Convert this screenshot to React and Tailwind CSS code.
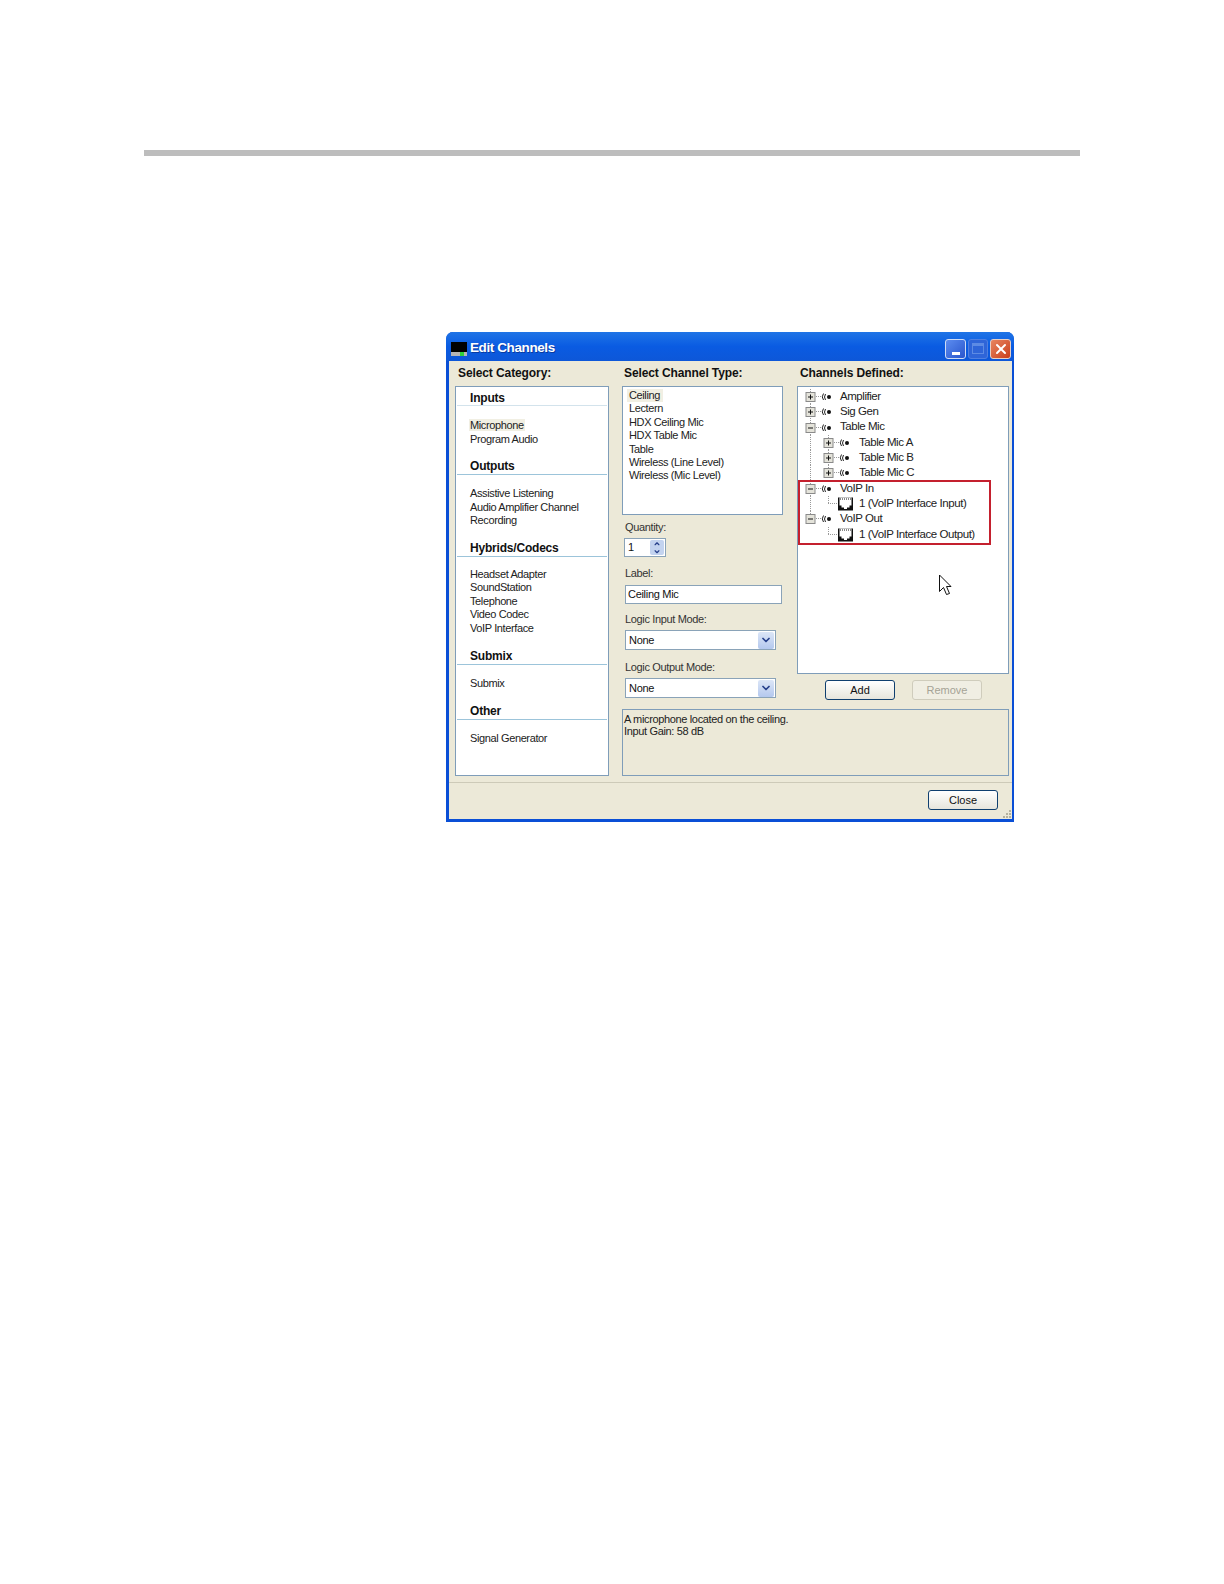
import React from "react";
import { X, ChevronUp, ChevronDown } from "lucide-react";

const sections = [
  { title: "Inputs", items: ["Microphone", "Program Audio"], top: "mt-[4px]", head: "h-[15px] border-[#d3e3ec]", gap: "mt-[13px]" },
  { title: "Outputs", items: ["Assistive Listening", "Audio Amplifier Channel", "Recording"], top: "mt-[13px]", head: "h-4 border-[#9cc4da]", gap: "mt-3" },
  { title: "Hybrids/Codecs", items: ["Headset Adapter", "SoundStation", "Telephone", "Video Codec", "VoIP Interface"], top: "mt-[13px]", head: "h-4 border-[#9cc4da]", gap: "mt-[11px]" },
  { title: "Submix", items: ["Submix"], top: "mt-[14px]", head: "h-4 border-[#9cc4da]", gap: "mt-3" },
  { title: "Other", items: ["Signal Generator"], top: "mt-[13px]", head: "h-4 border-[#9cc4da]", gap: "mt-3" },
];

const channelTypes = ["Ceiling", "Lectern", "HDX Ceiling Mic", "HDX Table Mic", "Table", "Wireless (Line Level)", "Wireless (Mic Level)"];

const treeRows = [
  { label: "Amplifier", level: 0, exp: "+", icon: "mic", rail0: true },
  { label: "Sig Gen", level: 0, exp: "+", icon: "mic", rail0: true },
  { label: "Table Mic", level: 0, exp: "-", icon: "mic", rail0: true },
  { label: "Table Mic A", level: 1, exp: "+", icon: "mic", rail0: true, rail1: true },
  { label: "Table Mic B", level: 1, exp: "+", icon: "mic", rail0: true, rail1: true },
  { label: "Table Mic C", level: 1, exp: "+", icon: "mic", rail0: true, rail1: "end" },
  { label: "VoIP In", level: 0, exp: "-", icon: "mic", rail0: true },
  { label: "1 (VoIP Interface Input)", level: 1, icon: "jack", rail0: true, rail1: "end" },
  { label: "VoIP Out", level: 0, exp: "-", icon: "mic", rail0: "end" },
  { label: "1 (VoIP Interface Output)", level: 1, icon: "jack", rail1: "end" },
];

const Heading = ({ children, className = "" }) => (
  <div className={`h-4 mb-[5px] text-[12px] leading-4 font-bold tracking-[-0.1px] text-[#111] ${className}`}>{children}</div>
);

const FieldLabel = ({ children, className = "" }) => (
  <div className={`h-[14px] ml-[3px] text-[11px] leading-[14px] tracking-[-0.35px] text-[#333] ${className}`}>{children}</div>
);

const XpButton = ({ children, disabled, className = "" }) => (
  <button
    className={`h-5 w-[70px] rounded-[3px] border text-[11px] leading-none ${
      disabled
        ? "border-[#cfccbc] bg-[#f0eee3] text-[#a5a396]"
        : "border-[#0f3f6f] bg-gradient-to-b from-white to-[#e6e5dc] text-[#111]"
    } ${className}`}
  >
    {children}
  </button>
);

const Select = ({ className = "" }) => (
  <div className={`ml-[3px] flex h-5 w-[151px] items-center justify-between border border-[#8aa3b8] bg-white pl-[3px] pr-px text-[11px] tracking-[-0.3px] text-[#111] ${className}`}>
    None
    <div className="flex h-[17px] w-4 items-center justify-center rounded-[2px] bg-gradient-to-b from-[#dce6f7] to-[#b4c8ee]">
      <ChevronDown className="h-3 w-3 text-[#27408b]" strokeWidth={3.5} />
    </div>
  </div>
);

const TreeGlyph = ({ row }) => {
  const ex = row.level === 0 ? 12 : 30;
  const ix = row.level === 0 ? 23 : 41;
  return (
    <svg width={row.level === 0 ? 42 : 61} height="15.3" className="shrink-0 overflow-visible">
      <g stroke="#999" strokeDasharray="1 1" fill="none">
        {row.rail0 && <line x1="12.5" y1="0" x2="12.5" y2={row.rail0 === "end" ? 8 : 16} />}
        {row.rail1 && <line x1="30.5" y1="0" x2="30.5" y2={row.rail1 === "end" ? 8 : 16} />}
        <line x1={ex} y1="7.5" x2={row.icon === "jack" ? 40 : ix} y2="7.5" />
      </g>
      {row.exp && (
        <g>
          <rect x={ex - 4} y="3.5" width="9" height="9" fill="#e4e3da" stroke="#8a8a8a" />
          <line x1={ex - 2} y1="8" x2={ex + 3} y2="8" stroke="#111" />
          {row.exp === "+" && <line x1={ex + 0.5} y1="5.5" x2={ex + 0.5} y2="10.5" stroke="#111" />}
        </g>
      )}
      {row.icon === "mic" && (
        <g fill="none" stroke="#222">
          <path d={`M${ix + 2.5} 4.5 Q${ix} 8 ${ix + 2.5} 11`} />
          <path d={`M${ix + 4.5} 5 Q${ix + 2.5} 8 ${ix + 4.5} 11`} />
          <circle cx={ix + 8} cy="8" r="2" fill="#111" stroke="none" />
        </g>
      )}
      {row.icon === "jack" && (
        <g>
          <rect x="40" y="1.5" width="15" height="13" fill="#111" />
          <path d="M41.5 1.5 H53.5 V9.5 H51.5 V11.5 H49 V13 H46 V11.5 H43.5 V9.5 H41.5 Z" fill="#fff" />
          <path d="M42 3 H53" stroke="#111" strokeDasharray="1 1" />
        </g>
      )}
    </svg>
  );
};

export default function App() {
  return (
    <div className="h-[1584px] w-[1224px] bg-white pt-[150px] font-['Liberation_Sans',sans-serif]">
      <div className="ml-[144px] h-[6px] w-[936px] bg-[#bdbdbd]" />

      <div className="ml-[446px] mt-[176px] flex h-[490px] w-[568px] flex-col rounded-t-[7px] border-b-[3px] border-l-[3px] border-r-2 border-[#0a4fd6] bg-[#0a4fd6]">
        <div className="-ml-[3px] -mr-[2px] flex h-[29px] shrink-0 items-center rounded-t-[7px] bg-gradient-to-b from-[#1f74e6] via-[#0a5be2] to-[#0d57d8] pl-[5px] pr-[3px] pt-1">
          <div className="flex h-[14px] w-4 flex-col">
            <div className="h-[10px] bg-black" />
            <div className="flex h-1 bg-[#b5b5b5]">
              <div className="ml-[9px] w-[4px] bg-[#2fd03a]" />
            </div>
          </div>
          <span className="ml-[3px] text-[13.5px] font-bold tracking-[-0.4px] text-white [text-shadow:1px_1px_0_#0a3ba0]">Edit Channels</span>
          <div className="ml-auto flex gap-[2px]">
            <div className="flex h-5 w-[21px] items-end justify-center rounded-[3px] border border-[#cfdcf5] bg-gradient-to-br from-[#5c8cf0] to-[#2a55cc] pb-[3px]">
              <div className="h-[3px] w-2 bg-white" />
            </div>
            <div className="flex h-5 w-[20px] items-center justify-center rounded-[3px] border border-[#4f7fe0] bg-[#2f65d8]">
              <div className="h-[11px] w-[12px] border border-t-[3px] border-[#5d8be4]" />
            </div>
            <div className="flex h-5 w-[21px] items-center justify-center rounded-[3px] border border-[#e8cfc4] bg-gradient-to-br from-[#e8855f] to-[#c83c18]">
              <X className="h-4 w-4 text-white" strokeWidth={3} />
            </div>
          </div>
        </div>

        <div className="flex min-h-0 flex-1 flex-col bg-[#ece9d8]">
          <div className="flex h-[421px] shrink-0 pl-[6px] pr-[3px] pt-1">
            <div className="w-[154px] shrink-0">
              <Heading className="ml-[3px]">Select Category:</Heading>
              <div className="h-[390px] border border-[#7f9db9] bg-white">
                {sections.map((s) => (
                  <div key={s.title} className={s.top}>
                    <div className={`mx-px border-b pl-[13px] text-[12px] font-bold leading-[14px] tracking-[-0.2px] text-[#111] ${s.head}`}>
                      {s.title}
                    </div>
                    <div className={`pl-[14px] text-[11px] leading-[13.5px] tracking-[-0.38px] text-[#222] ${s.gap}`}>
                      {s.items.map((item) => (
                        <div key={item}>
                          {item === "Microphone" ? <span className="-mx-px bg-[#f1efe3] px-px">{item}</span> : item}
                        </div>
                      ))}
                    </div>
                  </div>
                ))}
              </div>
            </div>

            <div className="ml-[13px] flex-1">
              <div className="flex h-[335px] gap-[14px]">
                <div className="w-[161px] shrink-0">
                  <Heading className="ml-[2px]">Select Channel Type:</Heading>
                  <div className="h-[129px] border border-[#7f9db9] bg-white pl-[6px] pt-[2px] text-[11px] leading-[13.4px] tracking-[-0.38px] text-[#222]">
                    {channelTypes.map((t, i) => (
                      <div key={t}>
                        {i === 0 ? <span className="-ml-[2px] inline-block bg-[#f1efe3] pl-[2px] pr-[3px]">{t}</span> : t}
                      </div>
                    ))}
                  </div>
                  <FieldLabel className="mt-[5px]">Quantity:</FieldLabel>
                  <div className="ml-[2px] mt-1 flex h-[19px] w-[42px] items-center justify-between border border-[#8aa3b8] bg-white pl-[3px] pr-px text-[11px] text-[#111]">
                    1
                    <div className="flex h-[15px] w-[14px] flex-col rounded-[2px] bg-[#c3d3ef]">
                      <ChevronUp className="h-2 w-[14px] text-[#27408b]" strokeWidth={4} />
                      <ChevronDown className="h-2 w-[14px] text-[#27408b]" strokeWidth={4} />
                    </div>
                  </div>
                  <FieldLabel className="mt-[9px]">Label:</FieldLabel>
                  <div className="ml-[3px] mt-[5px] flex h-[19px] w-[157px] items-center border border-[#8aa3b8] bg-white pl-[2px] text-[11px] tracking-[-0.3px] text-[#111]">
                    Ceiling Mic
                  </div>
                  <FieldLabel className="mt-2">Logic Input Mode:</FieldLabel>
                  <Select className="mt-1" />
                  <FieldLabel className="mt-[10px]">Logic Output Mode:</FieldLabel>
                  <Select className="mt-1" />
                </div>

                <div className="flex-1">
                  <Heading className="ml-[3px]">Channels Defined:</Heading>
                  <div className="relative h-[288px] border border-[#7f9db9] bg-white pt-[2px] text-[11.5px] tracking-[-0.45px] text-[#222]">
                    {treeRows.map((row) => (
                      <div key={row.label} className="flex h-[15.3px] items-center whitespace-nowrap leading-none">
                        <TreeGlyph row={row} />
                        {row.label}
                      </div>
                    ))}
                    <div className="absolute left-0 top-[93px] h-[65px] w-[193px] border-2 border-[#c4202e]" />
                    <svg className="absolute left-[140px] top-[187px]" width="14" height="23">
                      <path d="M1.5 1 V17.5 L5.5 13.5 L8.5 20.5 L11.5 19.5 L8.5 12.5 H13 Z" fill="#fff" stroke="#111" />
                    </svg>
                  </div>
                  <div className="mt-[6px] flex pl-[28px]">
                    <XpButton>Add</XpButton>
                    <XpButton disabled className="ml-[17px]">Remove</XpButton>
                  </div>
                </div>
              </div>
              <div className="mt-[9px] h-[67px] border border-[#7f9db9] pl-px pt-[3px] text-[11px] leading-3 tracking-[-0.35px] text-[#222]">
                <div>A microphone located on the ceiling.</div>
                <div>Input Gain: 58 dB</div>
              </div>
            </div>
          </div>

          <div className="relative flex flex-1 justify-end border-t border-[#cdcab8] pr-[14px] pt-[7px]">
            <XpButton>Close</XpButton>
            <svg className="absolute bottom-0 right-0" width="11" height="11">
              <g fill="#b5b29f">
                <rect x="8" y="2" width="2" height="2" />
                <rect x="5" y="5" width="2" height="2" />
                <rect x="8" y="5" width="2" height="2" />
                <rect x="2" y="8" width="2" height="2" />
                <rect x="5" y="8" width="2" height="2" />
                <rect x="8" y="8" width="2" height="2" />
              </g>
            </svg>
          </div>
        </div>
      </div>
    </div>
  );
}
